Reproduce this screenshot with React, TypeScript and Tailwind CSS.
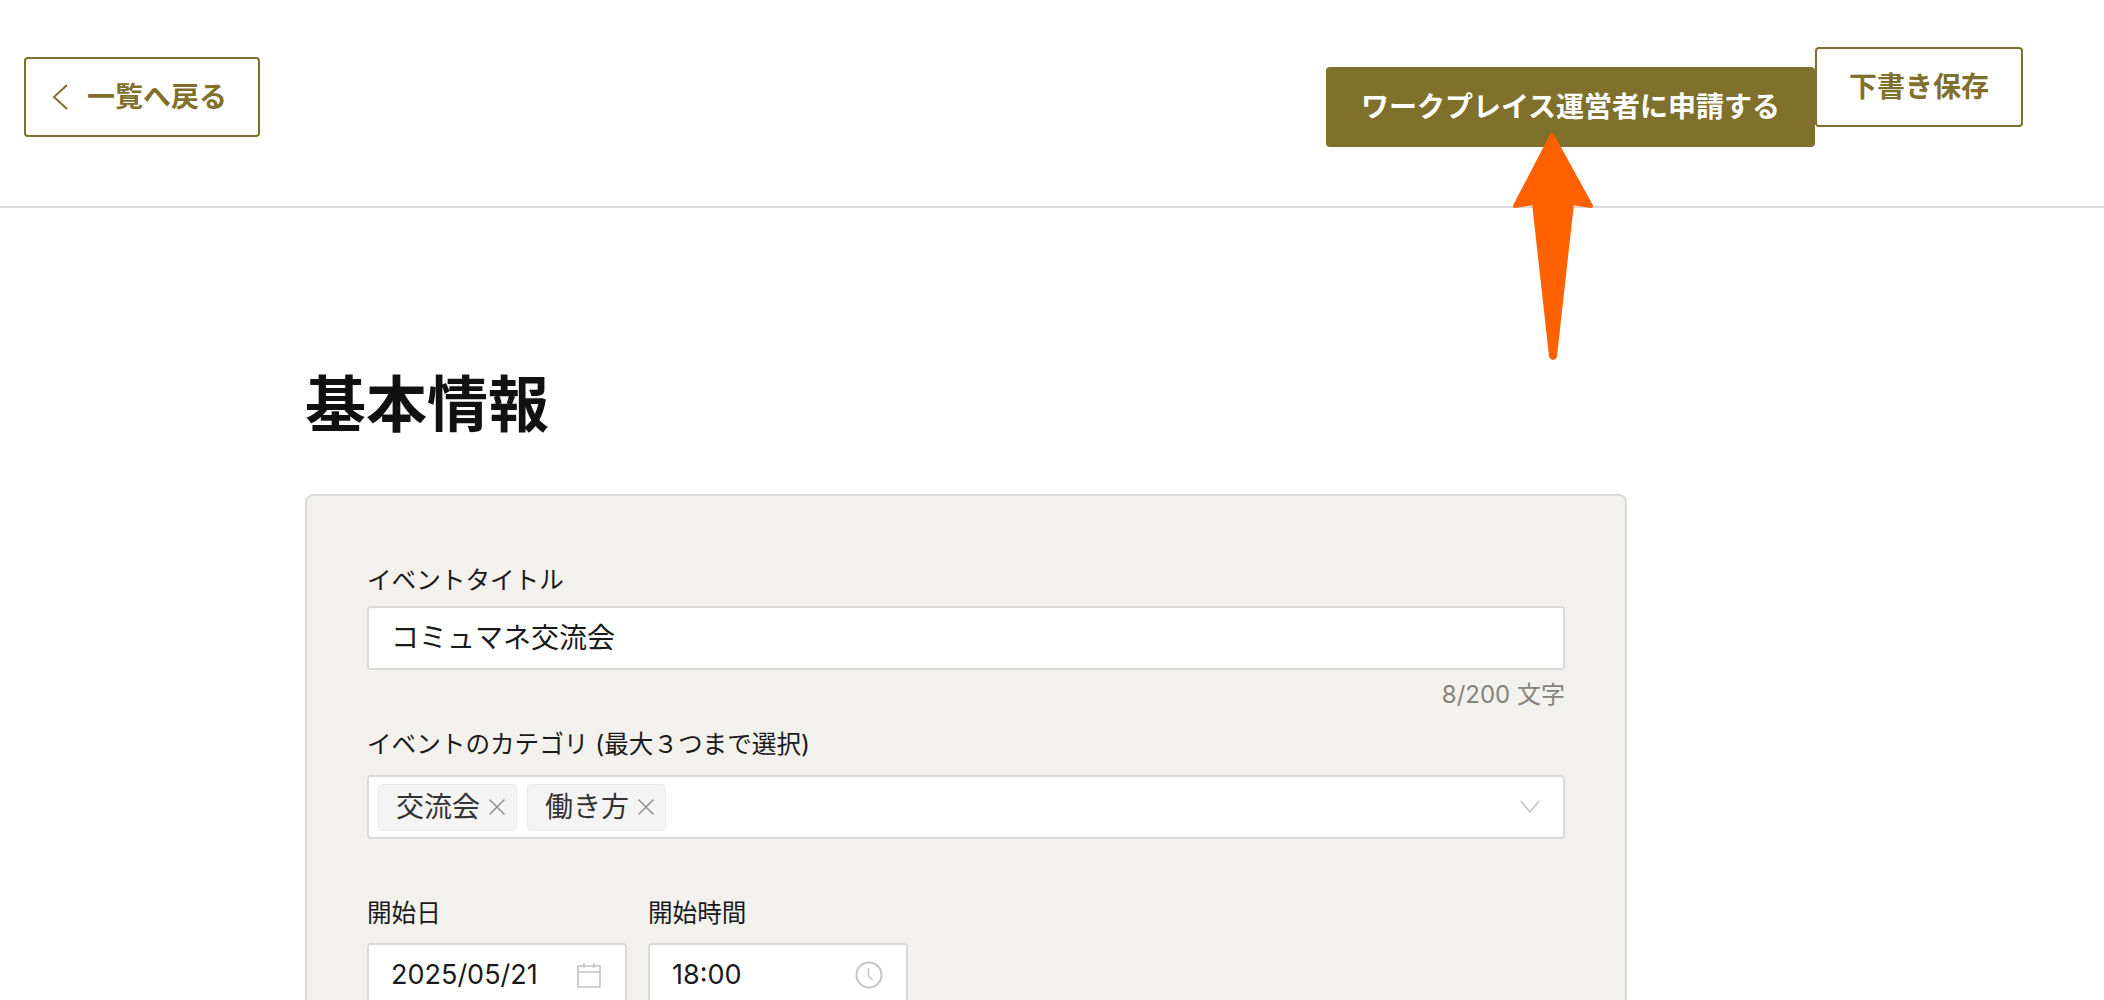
import React from 'react';
import { X } from 'lucide-react';

const labelClass = 'block text-[24.6px] leading-[32px] text-[#1a1a1a]';
const fieldClass = 'flex items-center bg-white border-2 border-[#d9d9d9] rounded-[4px] h-[64px] text-[#1a1a1a]';

const Tag = ({ name }: { name: string }) => (
  <span className="flex items-center h-[47px] pl-[17px] pr-[5px] bg-[#f4f4f4] border border-[#ececec] rounded-[4px] text-[28px] text-[#333]">
    {name}
    <X size={28} strokeWidth={1.2} className="ml-[3px] text-[#8c8c8c]" />
  </span>
);

const App = () => {
  return (
    <div className="relative h-[1000px] overflow-hidden bg-white font-['Inter','Noto_Sans_CJK_JP',sans-serif]">
      <header className="flex items-start h-[208px] border-b-2 border-[#d9d9d9]">
        <button className="flex items-center w-[236px] h-[80px] mt-[57px] ml-[24px] pl-[25px] border-2 border-[#7f702b] rounded-[4px] text-[28px] font-bold text-[#7f702b]">
          <svg width="18" height="26" viewBox="0 0 18 26" fill="none" stroke="#7f702b" strokeWidth="2" className="mr-[18px]">
            <path d="M16 1 3 13l13 12" />
          </svg>
          一覧へ戻る
        </button>
        <div className="flex items-start ml-[1066px]">
          <button className="w-[489px] h-[80px] mt-[67px] bg-[#7f702b] rounded-[4px] text-[28px] font-bold text-white">
            ワークプレイス運営者に申請する
          </button>
          <button className="w-[208px] h-[80px] mt-[47px] bg-white border-2 border-[#7f702b] rounded-[4px] text-[28px] font-bold text-[#7f702b]">
            下書き保存
          </button>
        </div>
      </header>

      <main className="ml-[305px] w-[1322px]">
        <h1 className="mt-[167px] mb-[59px] text-[61px] leading-[60px] font-bold text-[#111]">基本情報</h1>

        <section className="bg-[#f2f1ed] border-2 border-[#d9d9d9] rounded-[8px] pt-[68px] px-[60px] pb-[60px]">
          <label className={labelClass}>イベントタイトル</label>
          <div className={`${fieldClass} mt-[10px] pl-[22px] text-[28px]`}>コミュマネ交流会</div>
          <p className="mt-[11px] text-right text-[24px] leading-[28px] text-[#85847c]">8/200 文字</p>

          <label className={`${labelClass} mt-[19px]`}>イベントのカテゴリ (最大３つまで選択)</label>
          <div className={`${fieldClass} mt-[15px] pl-[9px] pr-[23px] gap-[10px]`}>
            <Tag name="交流会" />
            <Tag name="働き方" />
            <svg width="20" height="14" viewBox="0 0 20 14" fill="none" stroke="#c4c4c4" strokeWidth="1.6" className="ml-auto">
              <path d="M1 1l9 11 9-11" />
            </svg>
          </div>

          <div className="flex gap-[21px] mt-[58px]">
            <div className="w-[260px]">
              <label className={labelClass}>開始日</label>
              <div className={`${fieldClass} mt-[14px] pl-[22px] pr-[23px] justify-between text-[27px]`}>
                2025/05/21
                <svg width="26" height="27" viewBox="0 0 26 27" fill="none" stroke="#c4c4c4" strokeWidth="1.6">
                  <path d="M2 4h22v21H2zM2 10h22M8 1v5M18 1v5" />
                </svg>
              </div>
            </div>
            <div className="w-[260px]">
              <label className={labelClass}>開始時間</label>
              <div className={`${fieldClass} mt-[14px] pl-[22px] pr-[23px] justify-between text-[27px]`}>
                18:00
                <svg width="28" height="28" viewBox="0 0 28 28" fill="none" stroke="#c4c4c4" strokeWidth="2">
                  <circle cx="14" cy="14" r="12.5" />
                  <path d="M13.5 7v8l4 4" strokeWidth="1.6" />
                </svg>
              </div>
            </div>
          </div>
        </section>
      </main>

      {/* annotation arrow on top of the page */}
      <svg width="90" height="235" viewBox="0 0 90 235" className="absolute left-[1508px] top-[130px]">
        <path
          d="M44 5 L83 76 L64 73 L47 226 Q45 230 43 226 L26 73 L7 76 Z"
          fill="#ff6000"
          stroke="#ff6000"
          strokeWidth="4"
          strokeLinejoin="round"
        />
      </svg>
    </div>
  );
};

export default App;
